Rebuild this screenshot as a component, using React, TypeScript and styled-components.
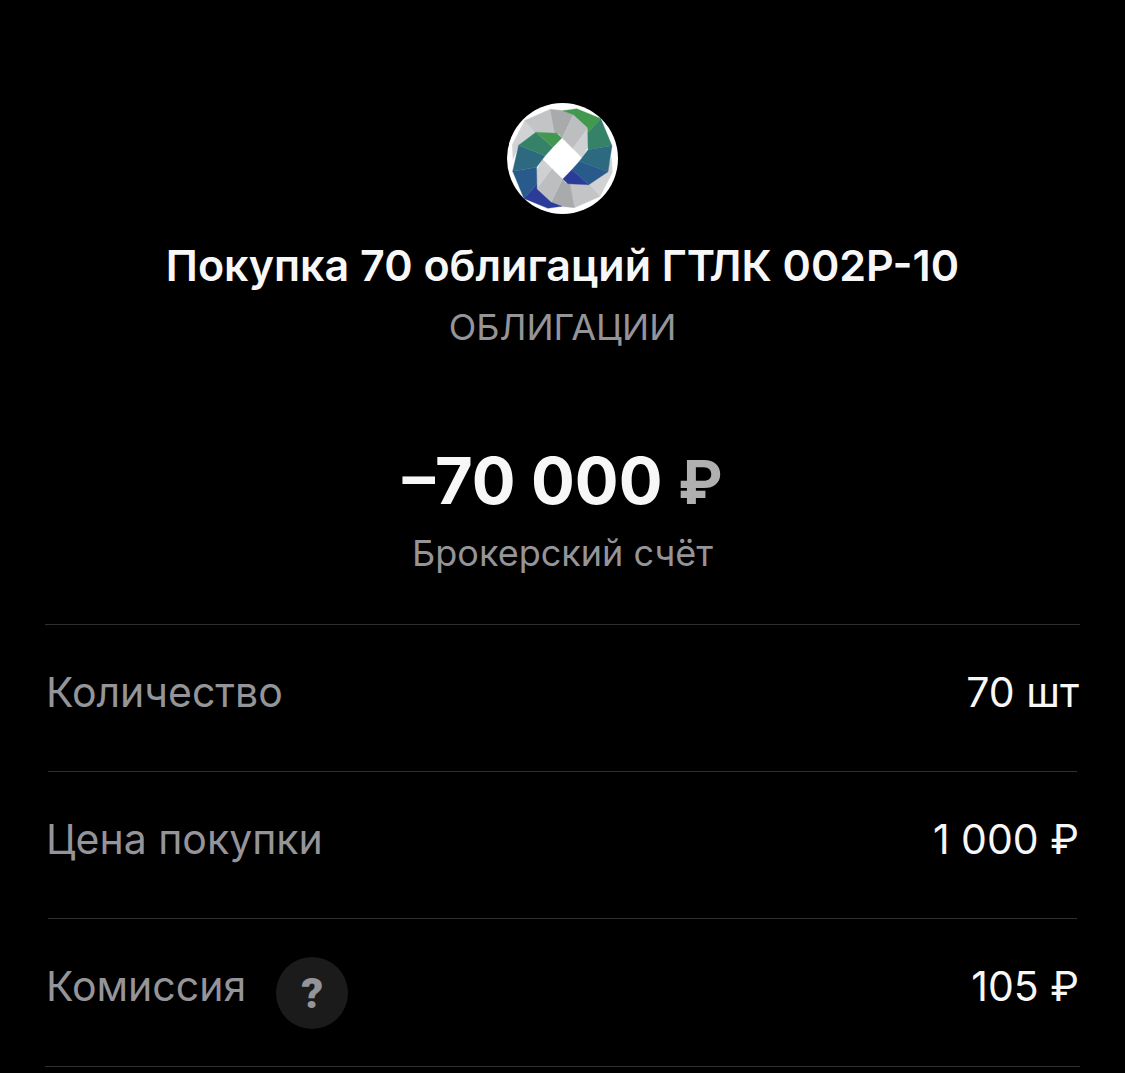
import { FC, ReactNode } from "react";
import styled, { createGlobalStyle } from "styled-components";

const colors = {
    black: "#000000",
    white: "#f7f7f8",
    grey: "#949499",
    lightGrey: "#b0b0b1",
    darkGrey: "#1b1b1b",
    line: "#303031",
};

const GlobalStyle = createGlobalStyle`
    * {
        box-sizing: border-box;
    }
    body {
        margin: 0;
        background: ${colors.black};
        color: ${colors.white};
        font-family: Inter, "Liberation Sans", sans-serif;
    }
`;

const Page = styled.main`
    padding: 103px 45px 0;
`;

const Header = styled.header`
    display: flex;
    flex-direction: column;
    align-items: center;
    padding-bottom: 46px;
    text-align: center;
`;

const Logo = styled.svg`
    display: block;
    width: 111px;
    height: 111px;
`;

const Title = styled.h1`
    margin: 26px 0 0;
    font-size: 43px;
    font-weight: 600;
    line-height: 50px;
`;

const Caption = styled.p`
    margin: 0;
    color: ${colors.grey};
    font-size: 36px;
    line-height: 50px;
`;

const Category = styled(Caption)`
    margin-top: 12px;
`;

const Amount = styled.p`
    margin: 89px 0 6px;
    font-size: 65px;
    font-weight: 700;
    line-height: 80px;
`;

const Currency = styled.span`
    color: ${colors.lightGrey};
    font-size: 60px;
`;

const Details = styled.dl`
    margin: 0;
    border-top: 1px solid ${colors.line};
    border-bottom: 1px solid ${colors.line};
`;

const Row = styled.div`
    display: flex;
    justify-content: space-between;
    align-items: flex-start;
    min-height: 146px;
    padding: 42px 1px 41px;
    font-size: 41px;
    line-height: 50px;
`;

const Divider = styled.div`
    height: 1px;
    margin: 0 3px;
    background: ${colors.line};
`;

const Label = styled.dt`
    display: flex;
    align-items: flex-start;
    gap: 30px;
    color: ${colors.grey};
`;

const Value = styled.dd`
    margin: 0;
`;

const HelpButton = styled.button`
    width: 72px;
    height: 72px;
    margin: -4px 0;
    padding: 0;
    border: 0;
    border-radius: 50%;
    background: ${colors.darkGrey};
    color: ${colors.grey};
    font-family: Roboto, sans-serif;
    font-size: 43px;
    font-weight: 900;
    cursor: pointer;
`;

const facets = [
    // upper grey arm
    { points: "38,150 75,78 112,114 57,155 40,195", fill: "#d1d2d4" },
    { points: "75,78 152,44 168,116 108,114", fill: "#c3c4c6" },
    { points: "152,44 195,48 222,60 188,130 178,118 166,116", fill: "#a9aaac" },
    { points: "222,60 265,102 220,162 188,130", fill: "#bdbec0" },
    { points: "265,102 266,158 248,190 220,162", fill: "#cfd0d2" },
    // lower grey arm
    { points: "339,234 302,306 265,270 320,229 337,189", fill: "#d1d2d4" },
    { points: "302,306 225,340 209,268 269,270", fill: "#c3c4c6" },
    { points: "225,340 182,336 155,324 189,254 199,266 211,268", fill: "#a9aaac" },
    { points: "155,324 112,282 157,222 189,254", fill: "#bdbec0" },
    { points: "112,282 111,226 129,194 157,222", fill: "#cfd0d2" },
    // right coloured arm
    { points: "190,48 232,42 304,72 265,115 265,100 222,60", fill: "#43984f" },
    { points: "304,72 338,154 266,166 265,115", fill: "#358268" },
    { points: "338,154 326,232 240,200 266,166", fill: "#2d6a80" },
    { points: "240,200 326,232 268,271 217,226", fill: "#285a8c" },
    { points: "217,226 268,271 205,268 190,254", fill: "#2a3c97" },
    // left coloured arm
    { points: "187,336 145,342 73,312 112,269 112,284 155,324", fill: "#2a3c97" },
    { points: "73,312 39,230 111,218 112,269", fill: "#285a8c" },
    { points: "39,230 57,152 137,184 111,218", fill: "#2d6a80" },
    { points: "137,184 57,152 109,113 160,158", fill: "#358268" },
    { points: "160,158 109,113 172,116 187,130", fill: "#43984f" },
];

const IssuerLogo: FC = () => (
    <Logo viewBox="22 25 334 334" role="img" aria-label="ГТЛК">
        <circle cx="189" cy="192" r="167" fill="#ffffff" />
        {facets.map(({ points, fill }) => (
            <polygon key={points} points={points} fill={fill} stroke={fill} strokeWidth="1" />
        ))}
    </Logo>
);

interface DetailRowProps {
    label: string;
    value: string;
    children?: ReactNode;
}

const DetailRow: FC<DetailRowProps> = ({ label, value, children }) => (
    <Row>
        <Label>
            {label}
            {children}
        </Label>
        <Value>{value}</Value>
    </Row>
);

const App: FC = () => {
    return (
        <>
            <GlobalStyle />
            <Page>
                <Header>
                    <IssuerLogo />
                    <Title>Покупка 70 облигаций ГТЛК 002Р-10</Title>
                    <Category>ОБЛИГАЦИИ</Category>
                    <Amount>
                        –70 000 <Currency>₽</Currency>
                    </Amount>
                    <Caption>Брокерский счёт</Caption>
                </Header>
                <Details>
                    <DetailRow label="Количество" value="70 шт" />
                    <Divider />
                    <DetailRow label="Цена покупки" value="1 000 ₽" />
                    <Divider />
                    <DetailRow label="Комиссия" value="105 ₽">
                        <HelpButton type="button" aria-label="О комиссии">
                            ?
                        </HelpButton>
                    </DetailRow>
                </Details>
            </Page>
        </>
    );
};

export default App;
